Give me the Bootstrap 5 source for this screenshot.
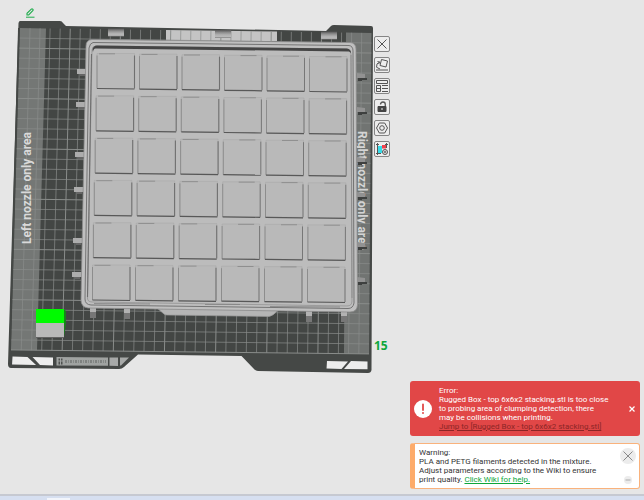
<!DOCTYPE html>
<html lang="en">
<head>
<meta charset="utf-8">
<meta name="viewport" content="width=device-width, initial-scale=1">
<title>Build plate</title>
<link href="https://cdn.jsdelivr.net/npm/bootstrap@5.3.0/dist/css/bootstrap.min.css" rel="stylesheet">
<style>
body{background:#e6e6e6;font-family:Roboto,"Noto Sans",sans-serif;font-size:8px;line-height:9px;color:#333}
.edit-bar{height:20px;padding:8px 0 0 25px}
.plain{border:0;background:none;padding:0;display:flex;align-items:center;justify-content:center;color:inherit}
.scene{width:373px;flex:none}
.scene text{font-family:Roboto,"Noto Sans",sans-serif;font-weight:700;font-size:12px}
.tools{gap:5px;padding:16px 0 0 1px}
.tool{width:16px;height:16px;border:1px solid #858585;border-radius:2px;background:#ededed;padding:0;display:flex;align-items:center;justify-content:center}
.tool svg{fill:none;stroke:#555;stroke-width:1}
.plate-no{color:#0ca63a;font-family:"Open Sans",sans-serif;font-size:12px;line-height:14px;font-weight:700;margin-bottom:22px}
.notices{width:230px;gap:7px;margin:auto 4px 5px auto}
.err{background:#e14747;color:#fff;border-radius:3px;padding:5px 4px;gap:7px}
.err a{color:#8c2626}
.warn{background:#fff;border:1px solid #f9b27c;border-left:5px solid #fdab6a;border-radius:3px;padding:4px 3px 4px 4px}
.warn a{color:#0ca63a}
.round{background:#ececec;border-radius:50%}
.dock{height:6px;background:#d6dff0;border-top:2px solid #c6c9d1;padding-left:47px}
.dock-item{width:23px;height:2px;margin-top:2px;background:#f2f5fb}
</style>
<script defer src="https://cdn.jsdelivr.net/npm/bootstrap@5.3.0/dist/js/bootstrap.bundle.min.js"></script>
</head>
<body>
<div class="d-flex flex-column min-vh-100 overflow-hidden">
<header class="edit-bar">
<button class="plain" aria-label="Rename plate"><svg width="10" height="10" viewBox="0 0 10 10" fill="none" stroke="#1eac4b"><path d="M2 7V5.300L6.300 1.200Q7 .6 7.700 1.200Q8.500 2 7.800 2.700L3.700 7Z" stroke-width="1.100"/><path d="M1 9.200H9.500"/></svg></button>
</header>
<main class="d-flex">
<svg class="scene" viewBox="0 20 373 355" role="img" aria-label="Rugged box on the build plate">
<defs>
<linearGradient id="tab" x1="0" y1="0" x2="0" y2="1"><stop stop-color="#555"/><stop offset=".3" stop-color="#8c8c8c"/><stop offset=".6" stop-color="#b0b0b0"/><stop offset=".85" stop-color="#b9b9b9"/><stop offset="1" stop-color="#777"/></linearGradient>
</defs>
<path d="M20 21H60Q62 21 63 23L66 26L326 31L331 26Q332 25 334 25L371 26Q373 26 373 28L371.500 370Q371 373 368 373L258 371Q256 371 254 369L241.500 356L138 354.500L124 367Q122 369 119 369L11 368Q8 368 8 364L18.500 23Q19 21 20 21Z" fill="#454846"/>
<path d="M20 28L371.500 33L369 354L11 350Z" fill="#434644"/>
<path d="M20 28L46 28.400L37 350.300L11 350Z" fill="#747775"/>
<path d="M346 32.600L371.500 33L369 354L344 353.700Z" fill="#717472"/>
<path d="M166 30L277 31.500V41H166Z" fill="#c4c4c4"/>
<g id="grid" fill="none" stroke="#8a8d8b"></g>
<path d="M18.800 28L10 350" stroke="#454846" stroke-width="1.500"/>
<text transform="translate(31 244) rotate(-90)" fill="#d9d9d9">Left nozzle only area</text>
<text transform="translate(358 131) rotate(90)" fill="#d4d4d4">Right nozzle only area</text>
<g id="clips"></g>
<path d="M157 308L164 314Q165 315 167 315L269 316.500Q273 316 278 310Z" fill="#b5b5b5" stroke="#999" stroke-width=".7"/>
<path d="M92 39.500L350 42.500Q356 43 356 49L357.500 305Q357 312 350 312L88 308Q81 307 81 300L86 46Q86 40 92 39.500Z" fill="#bfbfbf" stroke="#8b8b8b" stroke-width=".8"/>
<path d="M93 42.500L349 45.500Q353 46 353 51L354 303Q353 308.500 348 308.500L91 305Q85 304.500 85 299L89 48Q90 43 93 42.500Z" fill="none" stroke="#747474" stroke-width="1"/>
<path d="M96 46L347 49Q351 49.500 351 54L352 301Q352 306 347 306L92 302Q87 302 87.500 297L92 50Q92 46 96 46Z" fill="#bcbcbc" stroke="#929292" stroke-width=".8"/>
<path d="M92.500 50Q93 45.500 97 45.500L347 48.500Q351 49 351 53L349 51.500L96 48.500Q93.500 48 93 52Z" fill="#454545"/>
<path d="M91.500 54L87.500 297" stroke="#6e6e6e" stroke-width="1.100"/>
<path d="M351 55L352 298" stroke="#888" stroke-width=".8"/>
<path d="M94 303.500L150 304M205 304.500H240M270 306.500L340 307" stroke="#828282" stroke-width=".8"/>
<g id="cells"></g>
<path d="M64 309.500L66 311V323L64 337Z" fill="#16851a"/>
<rect x="36" y="309" width="28" height="14" fill="#00fb00"/><path d="M36 323H64V337.500H36Z" fill="#b9b9b9"/><path d="M36 337.500H64" stroke="#626262"/>
<g fill="#ededed">
<path d="M12.500 356.500L27.500 357L36 365L12 364.500Z"/><path d="M32.500 357L53 357.500V365.500L40 365Z"/>
<path d="M327 361L348 361.500L341.500 369L326.500 368.500Z"/><path d="M351 361L367.500 361.500V369.300L344 369Z"/>
</g>
<path d="M56.500 357L108 357.500V365.800L56.500 365.500Z" fill="#a0a3a1"/><path d="M109.500 357.500H118V366L109.500 365.800Z" fill="#a7a9a8"/><path d="M120 357.500H129L121 365.500H120Z" fill="#a7a9a8"/>
<path d="M58.500 358.500h1.500v2h-1.500zM61 358.500h1.500v2H61zM58.500 361.500h1.500v3h-1.500zM61 361.500h1.500v3H61z" fill="#4e514f"/>
<path d="M65 361.500H106" stroke="#7f8280" stroke-width="3" stroke-dasharray="2 1.200 .8 1"/>
</svg>
<div class="tools d-flex flex-column">
<button class="tool" aria-label="Delete plate"><svg width="14" height="14"><path d="M2.500 2.500L11.500 11.500M11.500 2.500L2.500 11.500"/></svg></button>
<button class="tool" aria-label="Auto orient"><svg width="14" height="14"><path d="M6.500 1.500L12.500 3L11 9L5 7.500ZM1 12H13M1.500 9.500Q1 5 4.500 4.200M2.500 3.500L5 4.200L3.500 6M2 9.500L5 11"/></svg></button>
<button class="tool" aria-label="Arrange"><svg width="14" height="14"><path d="M1.500 1.500H12.500V4.500H1.500ZM1.500 6.500H5.500V12.500H1.500ZM7 6.500H13M7 9.500H13M7 12.500H13M1.500 9.500H5.500"/></svg></button>
<button class="tool" aria-label="Lock plate"><svg width="14" height="14"><path d="M5.500 4.500Q5.500 2 8 2Q10.300 2 10.300 4.500V6.500" stroke-width="1.300"/><path d="M3 6.500H11V11.500H3Z" fill="#444" stroke="#444"/><path d="M7 8V10" stroke="#eee"/></svg></button>
<button class="tool" aria-label="Plate settings"><svg width="14" height="14"><path d="M4.300 2H9.700L12.500 7L9.700 12H4.300L1.500 7Z"/><circle cx="7" cy="7" r="2.300"/></svg></button>
<button class="tool" aria-label="Filament map"><svg width="14" height="14"><path d="M3 4h4v7H3z" fill="#35dbe8" stroke="none"/><path d="M7 3h4v3.500H7z" fill="#f0414d" stroke="none"/><path d="M2.500 1V13M1 2.500H4M11.500 1V6M10 2.500H13M1 11.500H6"/><circle cx="10" cy="10" r="2.500" fill="#ddd"/><circle cx="10" cy="10" r=".6"/></svg></button>
<div class="plate-no mt-auto">15</div>
</div>
</main>
<section class="notices d-flex flex-column" aria-label="Notifications">
<div class="err d-flex align-items-center" role="alert">
<svg width="18" height="18" class="flex-shrink-0"><circle cx="9" cy="9" r="9" fill="#fff"/><path d="M9 4.500V10" stroke="#e14747" stroke-width="1.800" stroke-linecap="round"/><circle cx="9" cy="13" r="1" fill="#e14747"/></svg>
<div class="flex-grow-1">Error:<br>Rugged Box - top 6x6x2 stacking.stl is too close<br>to probing area of clumping detection, there<br>may be collisions when printing.<br><a href="#">Jump to [Rugged Box - top 6x6x2 stacking.stl]</a></div>
<button class="plain" aria-label="Close error"><svg width="8" height="8"><path d="M1.500 1.500L6.500 6.500M6.500 1.500L1.500 6.500" stroke="#fff" stroke-width="1.200"/></svg></button>
</div>
<div class="warn d-flex" role="status">
<div class="flex-grow-1">Warning:<br>PLA and PETG filaments detected in the mixture.<br>Adjust parameters according to the Wiki to ensure<br>print quality. <a href="#">Click Wiki for help.</a></div>
<div class="d-flex flex-column align-items-center justify-content-between">
<button class="plain round" aria-label="Close warning"><svg width="16" height="16"><path d="M3.500 3.500L12.500 12.500M12.500 3.500L3.500 12.500" stroke="#888"/></svg></button>
<button class="plain round" aria-label="Minimize warning"><svg width="8" height="8"><path d="M1.500 4H6.500" stroke="#aaa"/></svg></button>
</div>
</div>
</section>
<footer class="dock"><div class="dock-item"></div></footer>
</div>
<script>
const path = (d, a) => `<path d="${d}" ${a || ''}/>`;
let grid = '';
for (let i = 1; i < 35; i++)
  grid += path(`M${20 + 10.05 * i} ${28 + i / 7}L${11 + 10.23 * i} ${350 + i / 9}`, `stroke-width="${i % 5 ? 0.7 : 1}"`);
for (let j = 1; j <= 32; j++) {
  const y = 28 + 10.06 * j, x = 20 - 9 * j / 32;
  grid += path(`M${x} ${y}L${371.5 - 2.5 * j / 32} ${y + 5 - j / 32}`, `stroke-width="${j % 5 === 2 ? 1 : 0.7}"`);
}
document.getElementById('grid').innerHTML = grid;

let clips = '';
[[77, 69], [76, 102], [75, 152], [74, 187], [73, 238], [72, 272]].forEach(([x, y]) => {
  clips += path(`M${x} ${y}H${x + 11}V${y + 5}H${x}Z`, 'fill="#adadad"') + path(`M${x + 3} ${y + 5}H${x + 8}V${y + 7}H${x + 3}Z`, 'fill="#666"');
});
[73, 107, 157, 192, 242, 277].forEach(y => {
  clips += path(`M357 ${y}L365 ${y + 1}V${y + 5}H357Z`, 'fill="#929292"') + path(`M358 ${y + 5}H367V${y + 7}H362V${y + 8}H358Z`, 'fill="#3e403f"');
});
[[108, 28.5], [215, 30], [321, 31.5]].forEach(([x, y]) => clips += path(`M${x} ${y}H${x + 16}V${y + 8}H${x}Z`, 'fill="url(#tab)"'));
[[90, 306], [124, 307], [306, 310], [341, 310]].forEach(([x, y]) => {
  clips += path(`M${x} ${y}H${x + 6}V${y + 7}H${x}Z`, 'fill="#b2b2b2"') + path(`M${x} ${y + 6}H${x + 6}V${y + 12}H${x}Z`, 'fill="#777"');
});
document.getElementById('clips').innerHTML = clips;

let cells = '';
for (let r = 0; r < 6; r++) for (let c = 0; c < 6; c++) {
  const x = 97 - 0.9 * r + (42.5 + 0.1 * r) * c, y = 53.5 + 42.3 * r + (0.6 - 0.04 * r) * c, w = 37.5, h = 35;
  cells += path(`M${x} ${y}h${w}v${h}h${-w}Z`, 'fill="#b9b9b9" stroke="#a9a9a9" stroke-width=".6"')
    + path(`M${x} ${y + 2}V${y + h}`, 'stroke="#848484" stroke-width=".8"')
    + path(`M${x + w} ${y + 2}V${y + h}`, `stroke="#707070" stroke-width="${c < 3 ? 1.1 : 0.9}"`)
    + path(`M${x} ${y + h}l${w} .5`, 'stroke="#585858" stroke-width="1.2"')
    + path(`M${x + (c < 3 ? 2 : 16)} ${y + 0.3}h16`, 'stroke="#808080" stroke-width=".7"');
}
document.getElementById('cells').innerHTML = cells;
</script>
</body>
</html>
